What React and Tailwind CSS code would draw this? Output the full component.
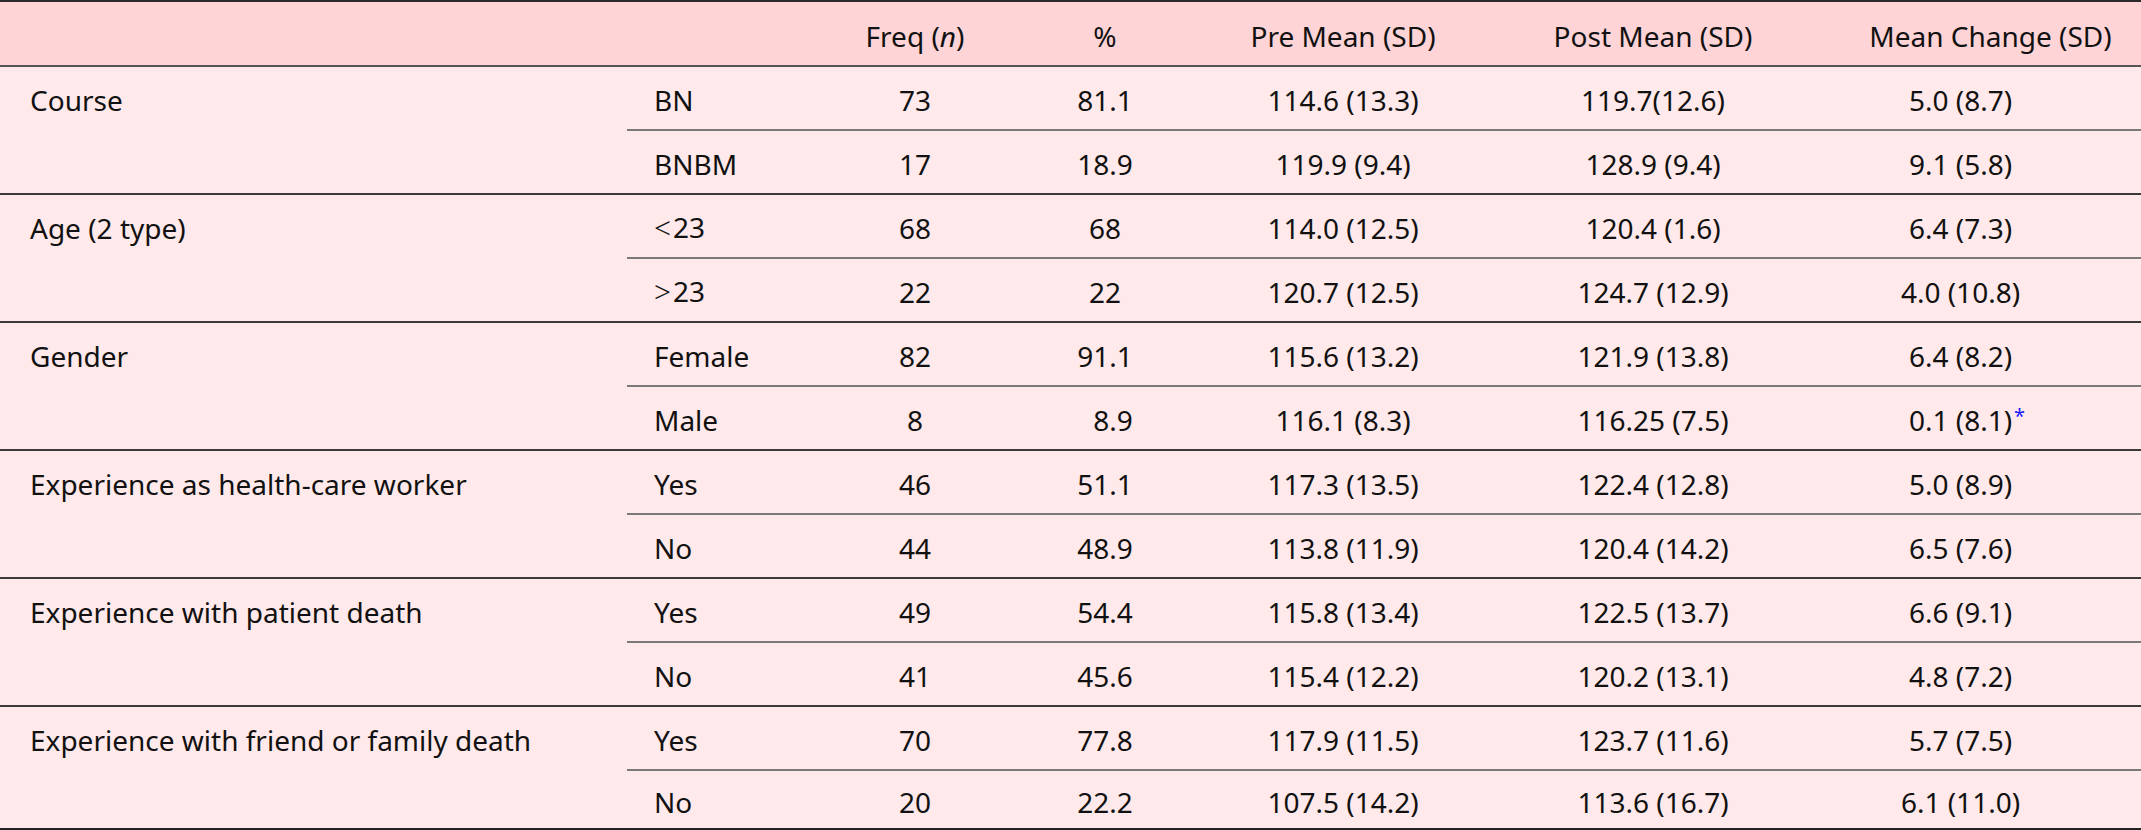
const groups = [
  {
    label: "Course",
    rows: [
      ["BN", "73", "81.1", "114.6 (13.3)", "119.7(12.6)", "5.0 (8.7)"],
      ["BNBM", "17", "18.9", "119.9 (9.4)", "128.9 (9.4)", "9.1 (5.8)"],
    ],
  },
  {
    label: "Age (2 type)",
    rows: [
      ["<23", "68", "68", "114.0 (12.5)", "120.4 (1.6)", "6.4 (7.3)"],
      [">23", "22", "22", "120.7 (12.5)", "124.7 (12.9)", "4.0 (10.8)"],
    ],
  },
  {
    label: "Gender",
    rows: [
      ["Female", "82", "91.1", "115.6 (13.2)", "121.9 (13.8)", "6.4 (8.2)"],
      ["Male", "8", "\u20078.9", "116.1 (8.3)", "116.25 (7.5)", "0.1 (8.1)", true],
    ],
  },
  {
    label: "Experience as health-care worker",
    rows: [
      ["Yes", "46", "51.1", "117.3 (13.5)", "122.4 (12.8)", "5.0 (8.9)"],
      ["No", "44", "48.9", "113.8 (11.9)", "120.4 (14.2)", "6.5 (7.6)"],
    ],
  },
  {
    label: "Experience with patient death",
    rows: [
      ["Yes", "49", "54.4", "115.8 (13.4)", "122.5 (13.7)", "6.6 (9.1)"],
      ["No", "41", "45.6", "115.4 (12.2)", "120.2 (13.1)", "4.8 (7.2)"],
    ],
  },
  {
    label: "Experience with friend or family death",
    rows: [
      ["Yes", "70", "77.8", "117.9 (11.5)", "123.7 (11.6)", "5.7 (7.5)"],
      ["No", "20", "22.2", "107.5 (14.2)", "113.6 (16.7)", "6.1 (11.0)"],
    ],
  },
];

function Sub({ value }) {
  // the < and > are set in a math font in the source
  if (value === "<23" || value === ">23") {
    return (
      <span>
        <span className="font-['Liberation_Serif',serif] text-[30px] font-light mr-[2px]">
          {value[0]}
        </span>
        23
      </span>
    );
  }
  return <span>{value}</span>;
}

function Row({ row, first, last }) {
  const [sub, freq, pct, pre, post, change, star] = row;
  let cls = "h-[62px]";
  if (!first) cls = (last ? "h-[59px]" : "h-[64px]") + " border-t-2 border-[#7a7a7a]";
  return (
    <div className={"flex items-center pt-[4px] " + cls}>
      <div className="w-[193px] pl-[27px]">
        <Sub value={sub} />
      </div>
      <div className="w-[190px] text-center">{freq}</div>
      <div className="w-[190px] text-center whitespace-pre">{pct}</div>
      <div className="w-[286px] text-center">{pre}</div>
      <div className="w-[334px] text-center">{post}</div>
      <div className="flex-1 pr-[40px] text-center">
        <span className="relative">
          {change}
          {star && (
            <span className="absolute -right-[13px] top-[5px] text-[20px] text-[#1a1aff]">
              *
            </span>
          )}
        </span>
      </div>
    </div>
  );
}

export default function App() {
  return (
    <div className="w-[2141px] h-[830px] overflow-hidden bg-[#ffe9ea] font-['Noto_Sans',sans-serif] text-[28px] leading-none text-[#111]">
      {/* header */}
      <div className="flex h-[67px] items-center bg-[#ffd4d6] border-t-2 border-b-2 border-t-[#2a2a2a] border-b-[#555] pt-[4px]">
        <div className="w-[627px]" />
        <div className="w-[193px]" />
        <div className="w-[190px] text-center">
          Freq (<i>n</i>)
        </div>
        <div className="w-[190px] text-center">%</div>
        <div className="w-[286px] text-center">Pre Mean (SD)</div>
        <div className="w-[334px] text-center">Post Mean (SD)</div>
        <div className="flex-1 pl-[20px] text-center">Mean Change (SD)</div>
      </div>

      {groups.map((g, i) => {
        const lastGroup = i === groups.length - 1;
        return (
          <div
            key={g.label}
            className={
              "flex border-b-2 " + (lastGroup ? "border-[#222]" : "border-[#3a3a3a]")
            }
          >
            <div className="w-[627px] pl-[30px] h-[62px] flex items-center pt-[4px]">
              {g.label}
            </div>
            <div className="flex-1 flex flex-col">
              {g.rows.map((r, j) => (
                <Row key={j} row={r} first={j === 0} last={lastGroup} />
              ))}
            </div>
          </div>
        );
      })}
    </div>
  );
}
